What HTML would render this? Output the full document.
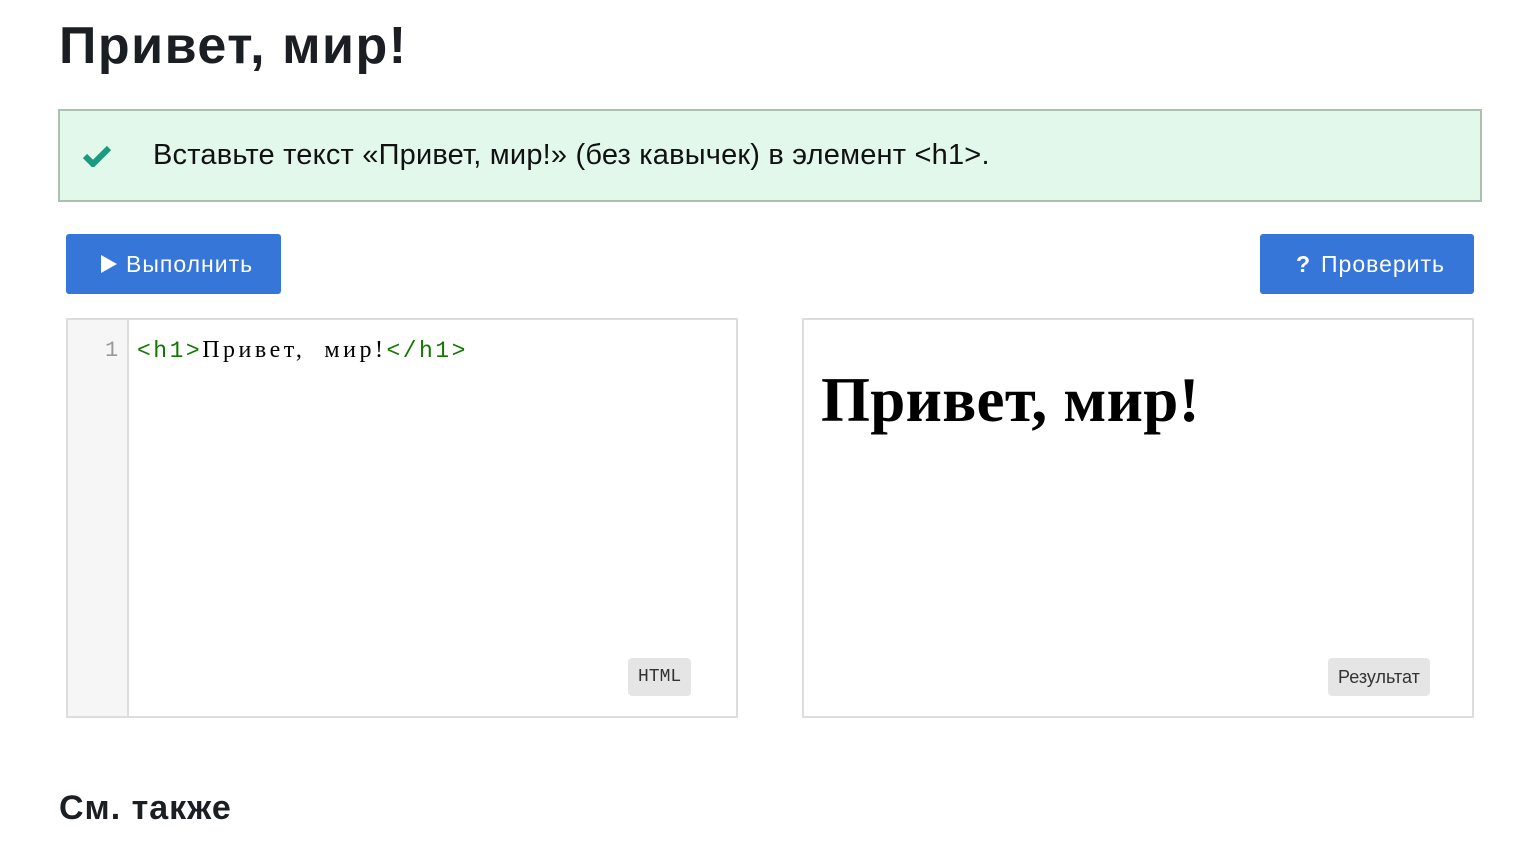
<!DOCTYPE html>
<html><head><meta charset="utf-8"><style>
body{margin:0;background:#fff;font-family:"Liberation Sans",sans-serif;color:#1b1f24;width:1516px;height:844px;overflow:hidden;position:relative}
.a{position:absolute}
h1{position:absolute;left:59px;top:14px;margin:0;font-size:52px;font-weight:bold;line-height:64px;color:#1b1f24;letter-spacing:1.5px}
.note{left:58px;top:109px;width:1420px;height:89px;background:#e1f8eb;border:2px solid #abc0b1}
.note span{position:absolute;left:93px;top:28px;font-size:29px;color:#111;letter-spacing:0.2px}
.btn{background:#3776d9;color:#fff;border-radius:3px;height:60px;font-size:23px;line-height:60px;letter-spacing:1px}
.box{border:2px solid #ddd;background:#fff;height:396px;top:318px}
.tag{background:#e5e5e5;border-radius:4px;height:38px;line-height:38px;font-size:18px;color:#333;padding:0 10px}
</style></head><body>
<h1>Привет, мир!</h1>
<div class="a note">
<svg class="a" style="left:22px;top:34px" width="30" height="22" viewBox="0 0 30 22"><path d="M3 11l8 8L27 3" stroke="#1a9a7e" stroke-width="6" fill="none"/></svg>
<span>Вставьте текст «Привет, мир!» (без кавычек) в элемент &lt;h1&gt;.</span></div>
<div class="a btn" style="left:66px;top:234px;width:215px"><svg class="a" style="left:34px;top:20px" width="18" height="20"><path d="M1 1L17 10L1 19Z" fill="#fff"/></svg><span class="a" style="left:60px">Выполнить</span></div>
<div class="a btn" style="left:1260px;top:234px;width:214px"><span class="a" style="left:36px;font-weight:bold">?</span><span class="a" style="left:61px">Проверить</span></div>
<div class="a box" style="left:66px;width:668px">
<div class="a" style="left:0;top:0;width:59px;height:396px;background:#f6f6f6;border-right:2px solid #ddd"></div>
<div class="a" style="left:37px;top:18px;font-family:'Liberation Mono',monospace;font-size:22px;color:#999">1</div>
<div class="a" style="left:69px;top:17px;font-family:'Liberation Mono',monospace;font-size:23px;white-space:pre;letter-spacing:2.5px"><span style="color:#170">&lt;h1&gt;</span><span style="color:#000;font-family:'Liberation Serif',serif;letter-spacing:3.5px;font-size:24px">Привет,  мир!</span><span style="color:#170">&lt;/h1&gt;</span></div>
<div class="a tag" style="left:560px;top:338px;font-family:'Liberation Mono',monospace">HTML</div>
</div>
<div class="a box" style="left:802px;width:668px">
<div class="a" style="left:17px;top:44px;font-family:'Liberation Serif',serif;font-weight:bold;font-size:63px;color:#000;letter-spacing:0.3px">Привет, мир!</div>
<div class="a tag" style="left:524px;top:338px">Результат</div>
</div>
<div class="a" style="left:59px;top:789px;font-size:34px;font-weight:bold;letter-spacing:1px">См. также</div>
</body></html>
